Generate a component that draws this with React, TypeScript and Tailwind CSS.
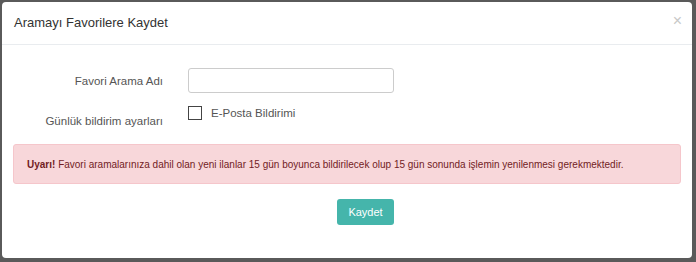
import React, { useState } from "react";

const App: React.FC = () => {
  const [name, setName] = useState("");
  const [email, setEmail] = useState(false);

  return (
    <div className="w-[696px] h-[262px] bg-[#5a5a5a] p-[2px] pr-[4px] pb-[4px] font-['Liberation_Sans',Arial,sans-serif]">
      <div className="h-full bg-white rounded-[4px] flex flex-col">
        {/* Header */}
        <div className="h-[43px] border-b border-[#e9ecef] flex items-center justify-between pl-[12px] pr-[10px]">
          <h4 className="text-[13px] text-[#333]">Aramayı Favorilere Kaydet</h4>
          <button type="button" className="text-[#c8c8c8] text-[16px] leading-none pb-[4px]">
            ×
          </button>
        </div>

        {/* Body */}
        <div className="px-[11px] pt-[22px] flex flex-col">
          <div className="flex items-center h-[26px]">
            <label className="w-[150px] text-right text-[11.5px] text-[#555] mt-[3px]">
              Favori Arama Adı
            </label>
            <input
              type="text"
              value={name}
              onChange={(e) => setName(e.target.value)}
              className="ml-[25px] w-[206px] h-[25px] border border-[#ccc] rounded-[3px] px-2 text-[12px] outline-none"
            />
          </div>
          <div className="flex h-[32px] mt-[10px]">
            <label className="w-[150px] text-right text-[11.5px] text-[#555] pt-[10px]">
              Günlük bildirim ayarları
            </label>
            <label className="ml-[25px] flex items-start gap-[9px] cursor-pointer pt-[2px]">
              <span
                onClick={() => setEmail(!email)}
                className="w-[14px] h-[14px] border-[1.5px] border-[#444] bg-white mt-[1px]"
              />
              <span className="text-[11.5px] text-[#555]">E-Posta Bildirimi</span>
            </label>
          </div>

          {/* Alert */}
          <div className="mt-[9px] h-[40px] bg-[#f8d7da] border border-[#f5c6cb] rounded-[3px] flex items-center pl-[13px] text-[10px] text-[#721c24]">
            <span>
              <strong>Uyarı!</strong> Favori aramalarınıza dahil olan yeni ilanlar 15 gün boyunca bildirilecek olup 15 gün sonunda işlemin yenilenmesi gerekmektedir.
            </span>
          </div>

          <div className="flex justify-center mt-[15px]">
            <button
              type="button"
              className="w-[57px] h-[26px] bg-[#45b5ab] text-white text-[11px] rounded-[3px] ml-[37px]"
            >
              Kaydet
            </button>
          </div>
        </div>
      </div>
    </div>
  );
};

export default App;
